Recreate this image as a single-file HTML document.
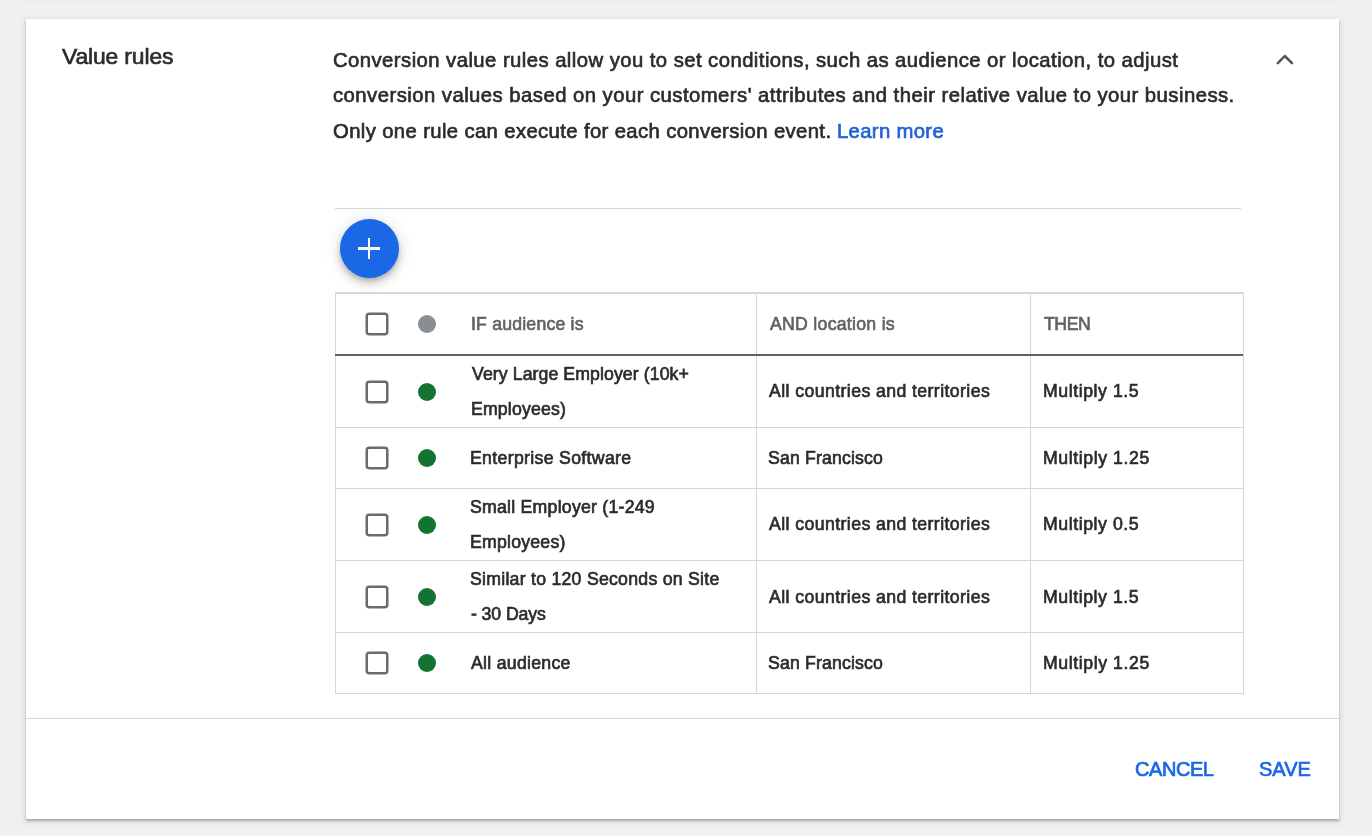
<!DOCTYPE html>
<html><head><meta charset="utf-8">
<style>
html,body{margin:0;padding:0;}
body{width:1372px;height:836px;overflow:hidden;background:#eff0f2;position:relative;font-family:"Liberation Sans",sans-serif;}
.abs{position:absolute;}
.card{position:absolute;left:26px;top:19px;width:1313px;height:800px;background:#fff;box-shadow:0 2px 2px rgba(60,64,67,.3),0 2px 6px 1px rgba(60,64,67,.15);}
.prev{position:absolute;left:26px;top:-303px;width:1313px;height:300px;background:#fff;box-shadow:0 1px 2px rgba(60,64,67,.3),0 1px 3px 1px rgba(60,64,67,.15);}
.tx{position:absolute;line-height:40px;white-space:nowrap;will-change:transform;}
.dk{color:#2a2b2e;-webkit-text-stroke:0.65px #2a2b2e;}
.gr{color:#5f6368;-webkit-text-stroke:0.65px #5f6368;}
.bl{color:#2160d8;-webkit-text-stroke:0.65px #2160d8;}
.bt{color:#1a68e4;-webkit-text-stroke:0.7px #1a68e4;}
.sep{position:absolute;left:335px;top:208px;width:906px;height:1px;background:#d4d6dc;}
.fab{position:absolute;left:340px;top:219px;width:59px;height:59px;border-radius:50%;background:#1a68e5;box-shadow:0 3px 5px -1px rgba(0,0,0,.2),0 6px 10px 0 rgba(0,0,0,.14),0 1px 18px 0 rgba(0,0,0,.12);}
.fab:before{content:"";position:absolute;left:18.3px;top:28.45px;width:21.4px;height:2.6px;background:#fff;}
.fab:after{content:"";position:absolute;left:27.5px;top:18.6px;width:2.6px;height:21.4px;background:#fff;}
.tbl{position:absolute;left:335px;top:292px;width:907px;height:399px;border:1px solid #d4d6dc;border-top:2px solid #d4d6dc;}
.hline{position:absolute;left:336px;width:907px;height:1px;background:#d4d6dc;}
.vline{position:absolute;width:1px;background:#d4d6dc;}
.cb{position:absolute;left:365.5px;width:18px;height:18px;border:2.5px solid #6b6b6b;border-radius:3px;}
.dot{position:absolute;left:418px;width:18px;height:18px;border-radius:50%;background:#137333;}
.foot{position:absolute;left:26px;top:718px;width:1313px;height:1px;background:#d4d6dc;}
</style></head><body>
<div class="prev"></div>
<div class="card"></div>
<svg class="abs" style="left:1270px;top:46px" width="30" height="26" viewBox="0 0 30 26"><polyline points="7.8,17.2 14.8,10.0 22.0,17.2" fill="none" stroke="#505357" stroke-width="2.5" stroke-linecap="round" stroke-linejoin="round"/></svg>
<div class="sep"></div>
<div class="tbl"></div>
<div class="fab"></div>
<div class="hline" style="top:427px"></div>
<div class="hline" style="top:488px"></div>
<div class="hline" style="top:560px"></div>
<div class="hline" style="top:632px"></div>
<div class="vline" style="left:756px;top:294px;height:399px"></div>
<div class="vline" style="left:1030px;top:294px;height:399px"></div>
<div class="abs" style="left:335px;top:354px;width:908px;height:2px;background:#5f6368"></div>
<svg class="abs" style="left:364px;top:311px" width="26" height="26"><rect x="2.75" y="2.75" width="20.5" height="20.5" rx="2.5" fill="none" stroke="#6b6b6b" stroke-width="2.5"/></svg>
<div class="dot" style="top:315px;background:#898e94"></div>
<svg class="abs" style="left:364px;top:378.5px" width="26" height="26"><rect x="2.75" y="2.75" width="20.5" height="20.5" rx="2.5" fill="none" stroke="#6b6b6b" stroke-width="2.5"/></svg>
<div class="dot" style="top:382.5px;background:#137333"></div>
<svg class="abs" style="left:364px;top:445px" width="26" height="26"><rect x="2.75" y="2.75" width="20.5" height="20.5" rx="2.5" fill="none" stroke="#6b6b6b" stroke-width="2.5"/></svg>
<div class="dot" style="top:449px;background:#137333"></div>
<svg class="abs" style="left:364px;top:511.5px" width="26" height="26"><rect x="2.75" y="2.75" width="20.5" height="20.5" rx="2.5" fill="none" stroke="#6b6b6b" stroke-width="2.5"/></svg>
<div class="dot" style="top:515.5px;background:#137333"></div>
<svg class="abs" style="left:364px;top:583.5px" width="26" height="26"><rect x="2.75" y="2.75" width="20.5" height="20.5" rx="2.5" fill="none" stroke="#6b6b6b" stroke-width="2.5"/></svg>
<div class="dot" style="top:587.5px;background:#137333"></div>
<svg class="abs" style="left:364px;top:649.5px" width="26" height="26"><rect x="2.75" y="2.75" width="20.5" height="20.5" rx="2.5" fill="none" stroke="#6b6b6b" stroke-width="2.5"/></svg>
<div class="dot" style="top:653.5px;background:#137333"></div>
<div class="foot"></div>
<div class="abs" style="left:0;top:835px;width:1372px;height:1px;background:#f4f5f6"></div>
<div class="tx dk" style="left:62.00px;top:36.00px;font-size:22.9px;letter-spacing:-0.140px">Value rules</div>
<div class="tx dk" style="left:333.00px;top:40.00px;font-size:20.3px;letter-spacing:0.444px">Conversion value rules allow you to set conditions, such as audience or location, to adjust</div>
<div class="tx dk" style="left:333.00px;top:75.00px;font-size:20.3px;letter-spacing:0.463px">conversion values based on your customers' attributes and their relative value to your business.</div>
<div class="tx dk" style="left:333.00px;top:111.00px;font-size:20.3px;letter-spacing:0.370px">Only one rule can execute for each conversion event.</div>
<div class="tx bl" style="left:837.00px;top:111.00px;font-size:20.3px;letter-spacing:0.333px">Learn more</div>
<div class="tx gr" style="left:471.00px;top:304.00px;font-size:17.7px;letter-spacing:0.185px">IF audience is</div>
<div class="tx gr" style="left:770.00px;top:304.00px;font-size:17.7px;letter-spacing:0.271px">AND location is</div>
<div class="tx gr" style="left:1044.00px;top:304.00px;font-size:17.7px;letter-spacing:-0.467px">THEN</div>
<div class="tx dk" style="left:472.00px;top:354.00px;font-size:17.7px;letter-spacing:0.083px">Very Large Employer (10k+</div>
<div class="tx dk" style="left:470.50px;top:389.00px;font-size:17.7px;letter-spacing:0.167px">Employees)</div>
<div class="tx dk" style="left:769.00px;top:371.00px;font-size:17.7px;letter-spacing:0.407px">All countries and territories</div>
<div class="tx dk" style="left:1042.50px;top:371.00px;font-size:17.7px;letter-spacing:0.564px">Multiply 1.5</div>
<div class="tx dk" style="left:469.50px;top:438.00px;font-size:17.7px;letter-spacing:0.322px">Enterprise Software</div>
<div class="tx dk" style="left:768.00px;top:438.00px;font-size:17.7px;letter-spacing:0.150px">San Francisco</div>
<div class="tx dk" style="left:1042.50px;top:438.00px;font-size:17.7px;letter-spacing:0.583px">Multiply 1.25</div>
<div class="tx dk" style="left:470.00px;top:487.00px;font-size:17.7px;letter-spacing:0.240px">Small Employer (1-249</div>
<div class="tx dk" style="left:470.00px;top:522.00px;font-size:17.7px;letter-spacing:0.222px">Employees)</div>
<div class="tx dk" style="left:769.00px;top:504.00px;font-size:17.7px;letter-spacing:0.407px">All countries and territories</div>
<div class="tx dk" style="left:1042.50px;top:504.00px;font-size:17.7px;letter-spacing:0.564px">Multiply 0.5</div>
<div class="tx dk" style="left:470.00px;top:559.00px;font-size:17.7px;letter-spacing:0.255px">Similar to 120 Seconds on Site</div>
<div class="tx dk" style="left:471.00px;top:594.00px;font-size:17.7px;letter-spacing:-0.100px">- 30 Days</div>
<div class="tx dk" style="left:769.00px;top:577.00px;font-size:17.7px;letter-spacing:0.407px">All countries and territories</div>
<div class="tx dk" style="left:1042.50px;top:577.00px;font-size:17.7px;letter-spacing:0.564px">Multiply 1.5</div>
<div class="tx dk" style="left:471.00px;top:643.00px;font-size:17.7px;letter-spacing:0.273px">All audience</div>
<div class="tx dk" style="left:768.00px;top:643.00px;font-size:17.7px;letter-spacing:0.150px">San Francisco</div>
<div class="tx dk" style="left:1042.50px;top:643.00px;font-size:17.7px;letter-spacing:0.583px">Multiply 1.25</div>
<div class="tx bt" style="left:1134.50px;top:749.00px;font-size:20px;letter-spacing:-0.440px">CANCEL</div>
<div class="tx bt" style="left:1259.00px;top:749.00px;font-size:20px;letter-spacing:0.000px">SAVE</div>
</body></html>
